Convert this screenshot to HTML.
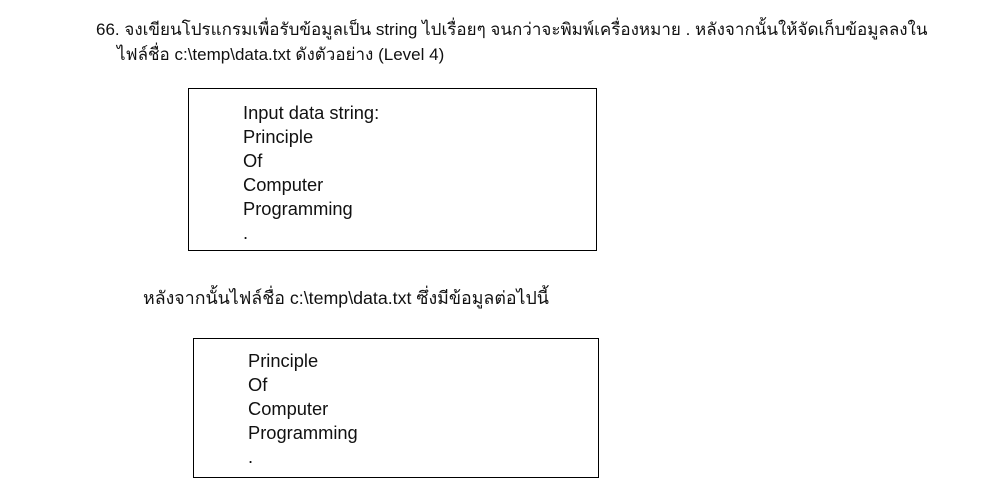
<!DOCTYPE html>
<html><head><meta charset="utf-8"><style>
body{margin:0;width:982px;height:487px;background:#fff;position:relative;font-family:"Liberation Sans","DejaVu Sans",sans-serif;font-size:17.8px;color:#111;overflow:hidden}
.t{position:absolute;white-space:nowrap;line-height:20px}
.box{position:absolute;border:1px solid #000}
</style></head><body>
<div class="t" style="left:96px;top:20px;font-size:17px">66. จงเขียนโปรแกรมเพื่อรับข้อมูลเป็น string ไปเรื่อยๆ จนกว่าจะพิมพ์เครื่องหมาย . หลังจากนั้นให้จัดเก็บข้อมูลลงใน</div>
<div class="t" style="left:117px;top:45px;font-size:17px">ไฟล์ชื่อ c:\temp\data.txt ดังตัวอย่าง (Level 4)</div>
<div class="box" style="left:188px;top:88px;width:407px;height:161px"></div>
<div class="t" style="left:243px;top:101px;line-height:24px;font-size:18.3px">Input data string:<br>Principle<br>Of<br>Computer<br>Programming<br>.</div>
<div class="t" style="left:143px;top:288px">หลังจากนั้นไฟล์ชื่อ c:\temp\data.txt ซึ่งมีข้อมูลต่อไปนี้</div>
<div class="box" style="left:193px;top:338px;width:404px;height:138px"></div>
<div class="t" style="left:248px;top:349px;line-height:24px;font-size:18.3px">Principle<br>Of<br>Computer<br>Programming<br>.</div>
</body></html>
